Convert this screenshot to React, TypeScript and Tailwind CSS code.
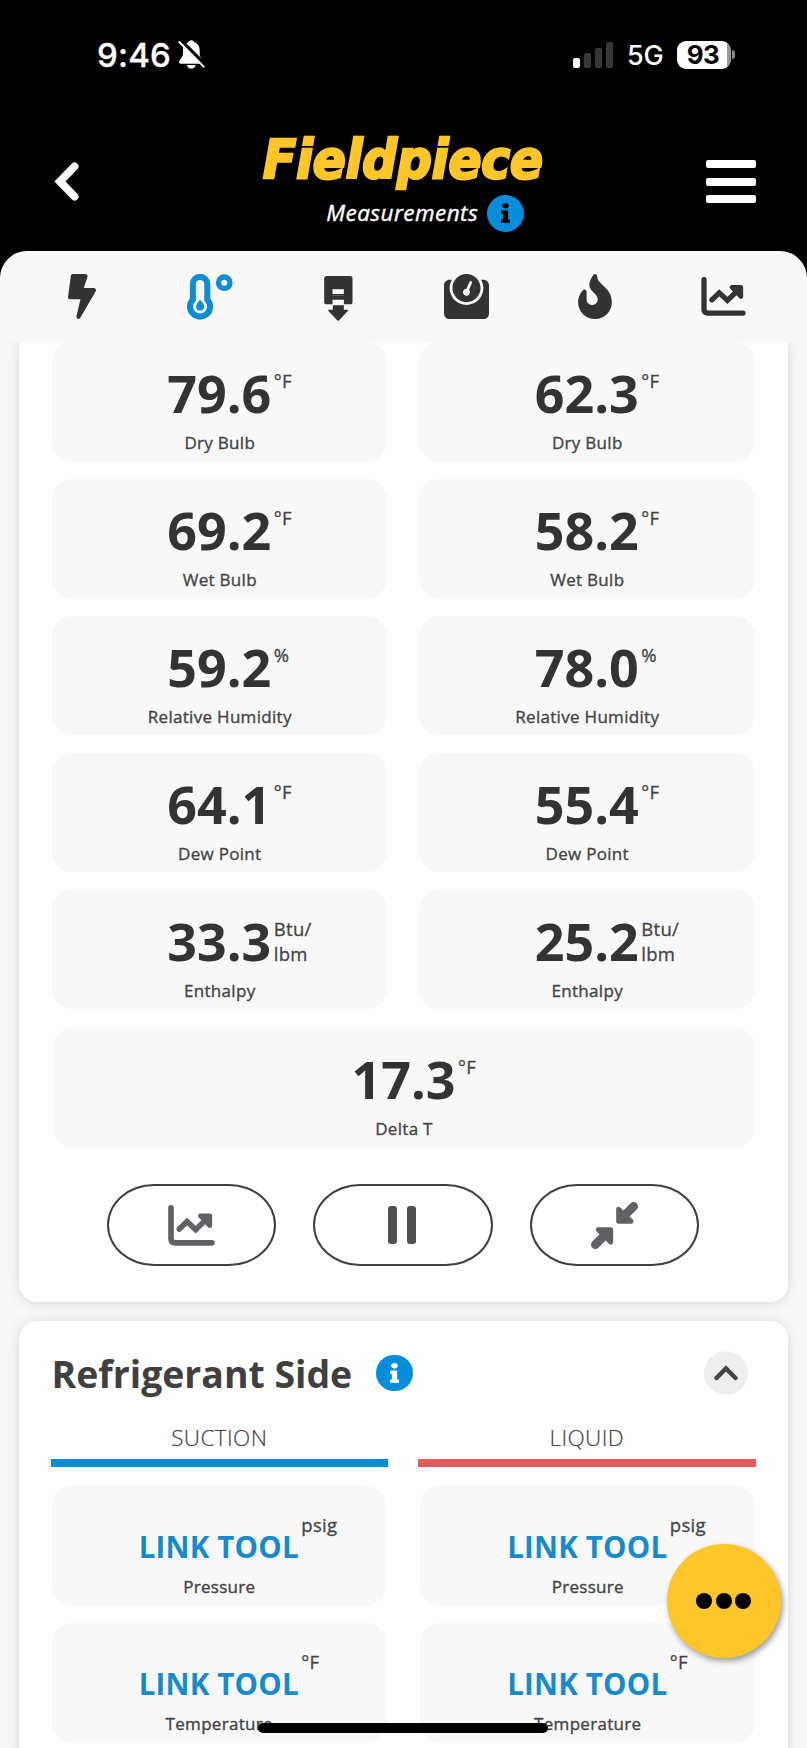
import React from 'react';
import { FaBolt, FaFire, FaInfo, FaWeight } from 'react-icons/fa';

type Reading = { value: string; unit: string; label: string };

const readings: Reading[] = [
  { value: '79.6', unit: '°F', label: 'Dry Bulb' },
  { value: '62.3', unit: '°F', label: 'Dry Bulb' },
  { value: '69.2', unit: '°F', label: 'Wet Bulb' },
  { value: '58.2', unit: '°F', label: 'Wet Bulb' },
  { value: '59.2', unit: '%', label: 'Relative Humidity' },
  { value: '78.0', unit: '%', label: 'Relative Humidity' },
  { value: '64.1', unit: '°F', label: 'Dew Point' },
  { value: '55.4', unit: '°F', label: 'Dew Point' },
  { value: '33.3', unit: 'Btu/\nlbm', label: 'Enthalpy' },
  { value: '25.2', unit: 'Btu/\nlbm', label: 'Enthalpy' },
];

const unlinked = [
  { unit: 'psig', label: 'Pressure' },
  { unit: 'psig', label: 'Pressure' },
  { unit: '°F', label: 'Temperature' },
  { unit: '°F', label: 'Temperature' },
];

const BellOff = () => (
  <svg className="w-[27px] h-[29px]" viewBox="0 0 81 87">
    <path
      fill="#fff"
      d="M40 1c-5 0-8 3-9 6C20 10 15 19 15 30v12C14 53 4 58 3 67c0 3 2 4 5 4h64c4 0 5-2 4-5-3-8-10-12-11-24V30C65 19 59 10 49 7c-1-3-4-6-9-6zM27 75h26c-1 7-6 11-13 11s-12-4-13-11z"
    />
    <path d="M6 0L82 76" stroke="#000" strokeWidth="13" />
    <path d="M4 6L77 80" stroke="#fff" strokeWidth="6" strokeLinecap="round" />
  </svg>
);

const ChartIcon = ({ className }: { className: string }) => (
  <svg className={className} viewBox="0 0 134 118" fill="none" stroke="currentColor">
    <path d="M8 8v89q0 12 12 12h106" strokeWidth="16" strokeLinecap="round" />
    <path d="M32 69l22-21 25 23 30-29" strokeWidth="16" strokeLinecap="round" />
    <path d="M92 31h28v29z" fill="currentColor" strokeWidth="13" strokeLinejoin="round" />
  </svg>
);

const ThermometerIcon = () => (
  <svg className="ml-[1px] w-[46px] h-[46px]" viewBox="0 0 137 137" fill="none" stroke="#0f8cd3">
    <path d="M17.500 30a21.500 21.500 0 0 1 43 0v46a30 30 0 1 1-43 0z" strokeWidth="18" />
    <path d="M39 76c4 7 12 12 12 21a12 12 0 0 1-24 0c0-9 8-14 12-21z" fill="#0f8cd3" stroke="none" />
    <circle cx="111" cy="26" r="17" strokeWidth="16" />
  </svg>
);

const FilterIcon = () => (
  <svg className="mt-[3px] w-[29px] h-[45px]" viewBox="0 0 86 135" fill="#333">
    <rect width="85" height="85" rx="8" />
    <path d="M25 40h34v14H25zM25 71h34v15H25z" fill="#fff" />
    <path d="M25 57h34v2H25z" fill="#777" />
    <path d="M26 88h33v13h11q4 1 1 4l-26 28q-3 3-6 0l-26-28q-3-3 1-4h12z" />
  </svg>
);

const CompressIcon = () => (
  <svg className="w-[47px] h-[47px]" viewBox="0 0 141 141" fill="#606164" stroke="#606164" strokeLinecap="round" strokeLinejoin="round">
    <path d="M83 22v36h37z" strokeWidth="15" />
    <path d="M96 45l32-32" strokeWidth="26" />
    <path d="M59 120V83H22z" strokeWidth="15" />
    <path d="M45 96l-32 32" strokeWidth="26" />
  </svg>
);

const InfoBadge = ({ className }: { className: string }) => (
  <span className={`flex w-[36.5px] h-[36.5px] items-center justify-center rounded-full bg-[#048dda] ${className}`}>
    <FaInfo className="w-[9px] h-[20px]" preserveAspectRatio="none" />
  </span>
);

const Label = ({ children }: { children: React.ReactNode }) => (
  <div className="mt-[8px] pl-[1px] text-[17px] leading-6 tracking-[0.3px] text-[#444] [-webkit-text-stroke:0.35px_#444]">
    {children}
  </div>
);

const Unit = ({ children }: { children: React.ReactNode }) => (
  <span className="absolute left-full top-[5px] ml-[2.5px] whitespace-pre text-[18.5px] font-normal leading-[25px] tracking-[0.3px] text-[#444] [-webkit-text-stroke:0.3px_#444]">
    {children}
  </span>
);

const Tile = ({ value, unit, label }: Reading) => (
  <div className="flex h-[119px] flex-col items-center rounded-[20px] bg-[#f8f8f8] pt-[21px]">
    <div className="relative h-[60px] text-[52px] font-bold leading-[60px] text-[#333]">
      {value}
      <Unit>{unit}</Unit>
    </div>
    <Label>{label}</Label>
  </div>
);

const LinkTile = ({ unit, label }: { unit: string; label: string }) => (
  <div className="flex h-[119px] flex-col items-center rounded-[20px] bg-[#f8f8f8] pt-[21px]">
    <div className="relative h-[60px] text-[29.5px] font-bold leading-[80px] tracking-[0.2px] text-[#188acb]">
      LINK TOOL
      <Unit>{unit}</Unit>
    </div>
    <Label>{label}</Label>
  </div>
);

const StatusBar = () => (
  <div className="flex h-[110px] items-start justify-between pl-[97px] pr-[72px] pt-[40px] font-[Inter,sans-serif] text-white">
    <div className="flex items-start">
      <span className="w-[81px] text-[33px] font-medium leading-[31px] tracking-[0.2px] [-webkit-text-stroke:0.3px_#fff]">9:46</span>
      <BellOff />
    </div>
    <div className="flex h-[29px] items-center">
      <div className="flex h-[27px] items-end gap-[4px]">
        <i className="h-[10px] w-[7px] rounded-[2px] bg-white" />
        <i className="h-[15px] w-[7px] rounded-[2px] bg-[#383838]" />
        <i className="h-[20px] w-[7px] rounded-[2px] bg-[#383838]" />
        <i className="h-[26px] w-[7px] rounded-[2px] bg-[#383838]" />
      </div>
      <span className="ml-[14px] w-[50px] text-[27px] font-medium leading-[29px] tracking-[-0.2px] pt-[2px]">5G</span>
      <span className="flex h-[28px] w-[54px] items-center justify-center rounded-[9px] bg-linear-to-r from-white from-[92%] to-[#999] to-[92%] pr-[2px] text-[26px] font-bold leading-[28px] tracking-[-0.5px] text-black">
        93
      </span>
      <i className="ml-[1px] h-[9px] w-[3px] rounded-r-full bg-[#888]" />
    </div>
  </div>
);

const Header = () => (
  <div className="flex h-[141px] justify-between pl-[54px] pr-[51px]">
    <svg className="mt-[51px] h-[41px] w-[50px]" viewBox="0 0 50 41" fill="none">
      <path d="M20.500 5.500L6 20.500L20.500 35.500" stroke="#f7f7f7" strokeWidth="8" strokeLinecap="round" />
    </svg>
    <div className="flex flex-col items-center">
      <svg className="mt-[6px] h-[76px] w-[290px] overflow-visible" viewBox="0 0 290 76">
        <text
          x="3"
          y="61.5"
          textLength="280"
          lengthAdjust="spacingAndGlyphs"
          fill="#ffc629"
          stroke="#ffc629"
          strokeWidth="2.5"
          className="font-['DejaVu_Sans_Condensed','DejaVu_Sans',sans-serif] text-[53px] font-bold italic"
        >
          Fieldpiece
        </text>
      </svg>
      <div className="mt-[3px] flex items-center pl-[40px]">
        <span className="w-[161px] whitespace-nowrap pb-[2px] text-[22.5px] italic leading-[33px] tracking-[0.45px] text-white [-webkit-text-stroke:0.4px_#fff]">
          Measurements
        </span>
        <InfoBadge className="text-black" />
      </div>
    </div>
    <div className="mt-[50px] flex w-[50px] flex-col gap-[9.5px]">
      <i className="h-[8px] rounded-[2px] bg-white" />
      <i className="h-[8px] rounded-[2px] bg-white" />
      <i className="h-[8px] rounded-[2px] bg-white" />
    </div>
  </div>
);

const App = () => {
  return (
    <div className="relative h-[1748px] w-[807px] overflow-hidden bg-[#f8f8f8] font-['Open_Sans',sans-serif]">
      <div className="bg-black">
        <StatusBar />
        <Header />
        <div className="grid h-[91px] grid-cols-6 items-center justify-items-center rounded-t-[27px] bg-[#f8f8f8] pl-[17px] pr-[19px] text-[#333]">
          <FaBolt className="ml-[2px] h-[45px] w-[28px]" />
          <ThermometerIcon />
          <FilterIcon />
          <FaWeight className="h-[45px] w-[45px]" />
          <FaFire className="h-[45px] w-[34px]" />
          <ChartIcon className="h-[39px] w-[45px]" />
        </div>
      </div>

      <div className="overflow-hidden pl-[18.5px] pr-[19.5px]">
        <div className="h-[960px] rounded-b-[18px] bg-white px-[33px] shadow-[0_1px_14px_rgba(0,0,0,0.14)]">
          <div className="grid grid-cols-2 gap-x-[32px] gap-y-[18px]">
            {readings.map((r, i) => (
              <Tile key={i} {...r} />
            ))}
          </div>
          <div className="mt-[19px] pl-[1px]">
            <Tile value="17.3" unit="°F" label="Delta T" />
          </div>
          <div className="mt-[37px] flex justify-center gap-[37px] pr-[1px]">
            <button className="flex h-[82px] w-[169px] items-center justify-center rounded-[47px/41px] border-2 border-[#404040] text-[#606164]">
              <ChartIcon className="h-[41px] w-[47px]" />
            </button>
            <button className="flex h-[82px] w-[180px] items-center justify-center gap-[9.5px] rounded-[47px/41px] border-2 border-[#404040] pr-[1px]">
              <i className="h-[38px] w-[9.5px] rounded-[3px] bg-[#505050]" />
              <i className="h-[38px] w-[9.5px] rounded-[3px] bg-[#505050]" />
            </button>
            <button className="flex h-[82px] w-[169px] items-center justify-center rounded-[47px/41px] border-2 border-[#404040]">
              <CompressIcon />
            </button>
          </div>
        </div>

        <div className="mt-[19px] h-[440px] rounded-t-[18px] bg-white px-[32px] pt-[30px] shadow-[0_1px_14px_rgba(0,0,0,0.14)]">
          <div className="flex h-[44px] items-center pl-[1px] pr-[8px]">
            <h2 className="w-[324.5px] whitespace-nowrap text-[37.4px] font-bold leading-[44px] pt-[2px] text-[#404040]">Refrigerant Side</h2>
            <InfoBadge className="text-white" />
            <span className="ml-auto flex h-[44px] w-[44px] items-center justify-center rounded-full bg-[#eee]">
              <svg className="h-[16px] w-[24px]" viewBox="0 0 24 16" fill="none">
                <path d="M2.500 13L12 3.500L21.500 13" stroke="#444" strokeWidth="4.500" strokeLinecap="round" />
              </svg>
            </span>
          </div>
          <div className="mt-[28px] grid grid-cols-2 gap-x-[30px] text-center text-[22.5px] font-light leading-[30px] tracking-[0.4px] text-[#444] [-webkit-text-stroke:0.2px_#444]">
            <div className="border-b-8 border-[#0a8bd6] pb-[6px]">SUCTION</div>
            <div className="border-b-8 border-[#e35b5b] pb-[6px]">LIQUID</div>
          </div>
          <div className="mt-[19px] grid grid-cols-2 gap-x-[34px] gap-y-[18px] px-[1px]">
            {unlinked.map((t, i) => (
              <LinkTile key={i} {...t} />
            ))}
          </div>
        </div>
      </div>

      {/* floating action button */}
      <button className="absolute left-[667px] top-[1544px] flex h-[114px] w-[114px] items-center justify-center gap-[3.5px] rounded-full bg-[#ffc629] pr-[1px] shadow-[2px_3px_6px_rgba(0,0,0,0.4)]">
        <i className="h-[16px] w-[16px] rounded-full bg-black" />
        <i className="h-[16px] w-[16px] rounded-full bg-black" />
        <i className="h-[16px] w-[16px] rounded-full bg-black" />
      </button>

      {/* home indicator */}
      <div className="absolute left-[258px] top-[1723px] h-[10px] w-[290px] rounded-full bg-black" />
    </div>
  );
};

export default App;
